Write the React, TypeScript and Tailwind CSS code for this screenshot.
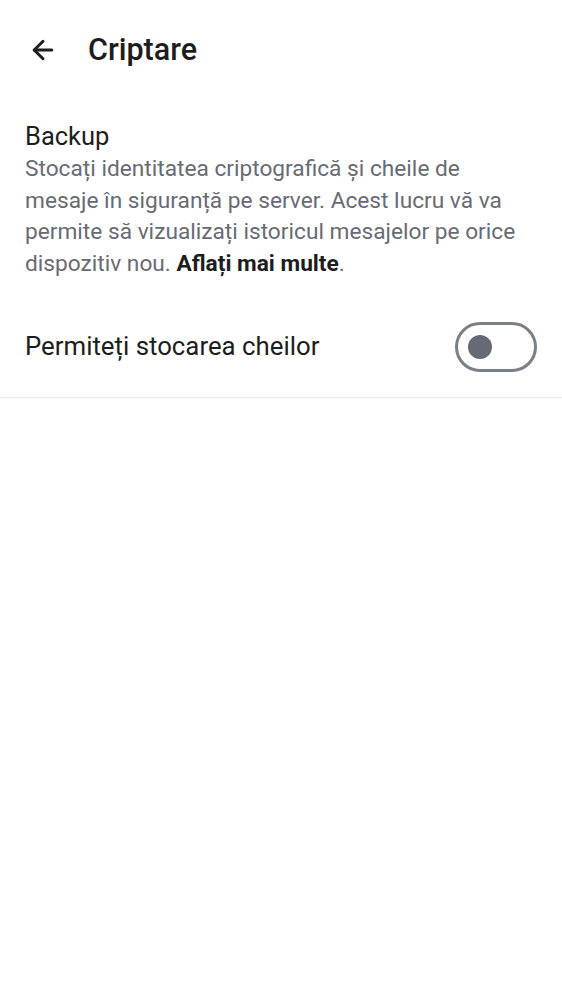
import { ArrowLeft } from "lucide-react";

export default function App() {
  return (
    <div
      className="min-h-[1000px] w-full bg-white text-[#1d1d20]"
      style={{ fontFamily: "Roboto, 'Noto Sans', sans-serif" }}
    >
      {/* Header */}
      <div className="flex h-[100px] items-center pl-[28px]">
        <ArrowLeft className="h-[30px] w-[30px]" strokeWidth={2.4} />
        <h1 className="ml-[30px] text-[30.5px] font-medium leading-none">Criptare</h1>
      </div>

      {/* Backup */}
      <div className="px-[25px] pt-[20px]">
        <div className="text-[25.5px] leading-[32px]">Backup</div>
        <p className="mt-[1px] text-[22.7px] leading-[31.7px] text-[#686b74]">
          Stocați identitatea criptografică și cheile de mesaje în siguranță pe server. Acest lucru vă va
          permite să vizualizați istoricul mesajelor pe orice dispozitiv nou.{" "}
          <span className="font-bold text-[#1d1d20]">Aflați mai multe</span>.
        </p>
      </div>

      {/* Toggle row */}
      <div className="mt-[42px] flex items-center justify-between border-b border-[#ececee] px-[25px] pb-[25px]">
        <span className="text-[25.8px]">Permiteți stocarea cheilor</span>
        <div className="flex h-[50px] w-[82px] items-center rounded-full border-[3px] border-[#7b7f88] px-[10px]">
          <div className="h-[24px] w-[24px] rounded-full bg-[#656a73]" />
        </div>
      </div>
    </div>
  );
}
